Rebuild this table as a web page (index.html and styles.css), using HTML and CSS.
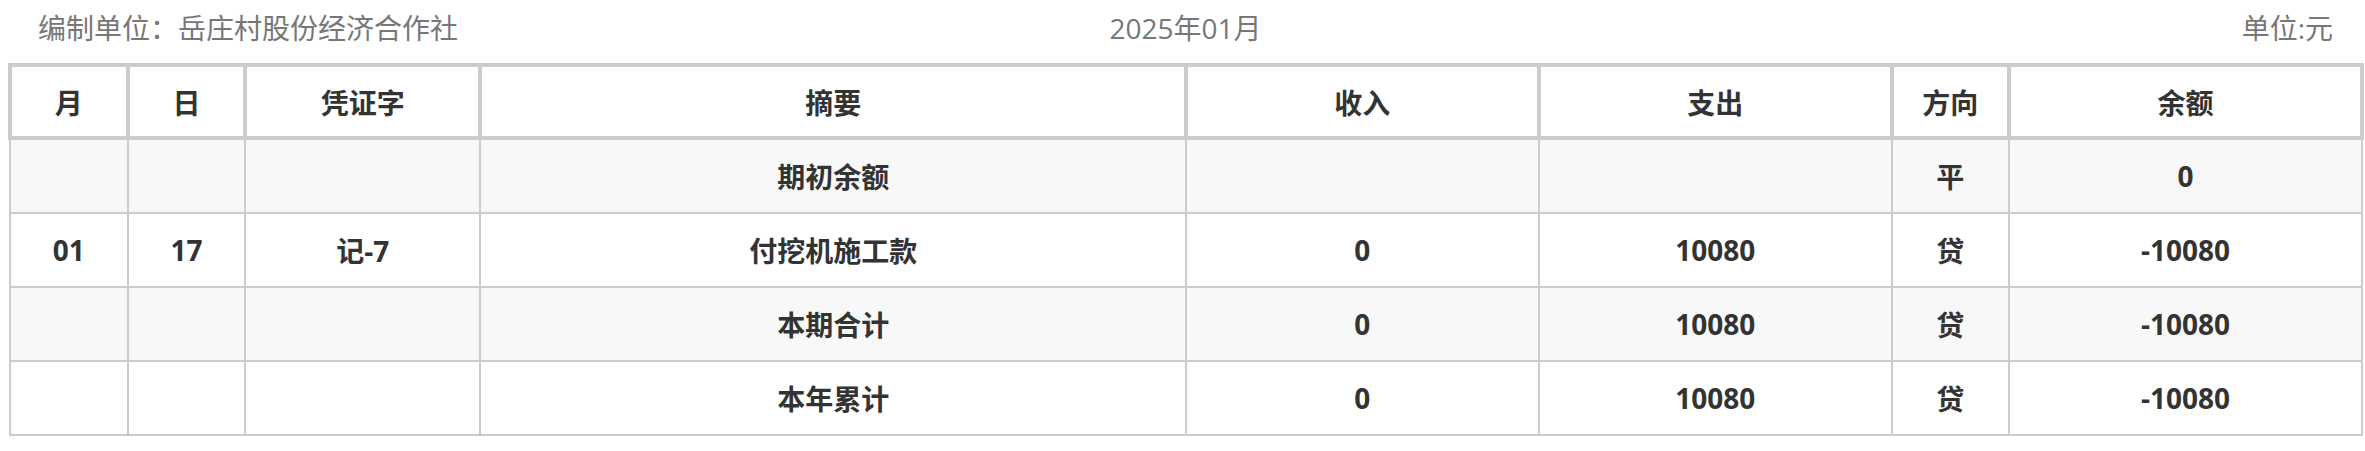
FILE: index.html
```html
<!DOCTYPE html>
<html lang="zh-CN">
<head>
<meta charset="utf-8">
<title>明细账</title>
<link rel="stylesheet" href="styles.css">
</head>
<body>
<div class="page">
  <div class="title-row">
    <span class="unit-name">编制单位：岳庄村股份经济合作社</span>
    <span class="period">2025年01月</span>
    <span class="currency">单位:元</span>
  </div>
  <table class="ledger">
    <colgroup>
      <col class="c-narrow"><col class="c-narrow"><col class="c-voucher"><col class="c-summary">
      <col class="c-money"><col class="c-money"><col class="c-narrow"><col class="c-money">
    </colgroup>
    <thead>
      <tr>
        <th>月</th><th>日</th><th>凭证字</th><th>摘要</th><th>收入</th><th>支出</th><th>方向</th><th>余额</th>
      </tr>
    </thead>
    <tbody>
      <tr class="alt">
        <td></td><td></td><td></td><td>期初余额</td><td></td><td></td><td>平</td><td>0</td>
      </tr>
      <tr>
        <td>01</td><td>17</td><td>记-7</td><td>付挖机施工款</td><td>0</td><td>10080</td><td>贷</td><td>-10080</td>
      </tr>
      <tr class="alt">
        <td></td><td></td><td></td><td>本期合计</td><td>0</td><td>10080</td><td>贷</td><td>-10080</td>
      </tr>
      <tr>
        <td></td><td></td><td></td><td>本年累计</td><td>0</td><td>10080</td><td>贷</td><td>-10080</td>
      </tr>
    </tbody>
  </table>
</div>
</body>
</html>
```

FILE: styles.css
```css
html, body {
  margin: 0;
  padding: 0;
  background: #ffffff;
}

body {
  font-family: "Open Sans", "Noto Sans CJK SC", sans-serif;
  color: #333333;
}

.page {
  padding: 0 0 0 8px;
  width: 2356px;
}

.title-row {
  display: flex;
  justify-content: space-between;
  align-items: center;
  height: 40px;
  padding: 8px 31px 15px 30px;
  font-size: 28px;
  line-height: 40px;
  color: #777777;
}

.unit-name,
.currency {
  flex: 1 1 0;
}

.currency {
  text-align: right;
}

.period {
  flex: 0 0 auto;
}

.ledger {
  width: 2356px;
  border-collapse: collapse;
  table-layout: fixed;
  font-size: 28px;
  font-weight: 700;
  color: #333333;
}

.c-narrow { width: 5%; }
.c-voucher { width: 10%; }
.c-summary { width: 30%; }
.c-money { width: 15%; }

.ledger th {
  height: 69px;
  padding: 0;
  border: 4px solid #cccccc;
  background: #ffffff;
  text-align: center;
  vertical-align: middle;
  font-weight: 700;
}

.ledger td {
  height: 72px;
  padding: 0;
  border: 2px solid #cccccc;
  text-align: center;
  vertical-align: middle;
  background: #ffffff;
}

.ledger tr.alt td {
  background: #f8f8f8;
}
```
